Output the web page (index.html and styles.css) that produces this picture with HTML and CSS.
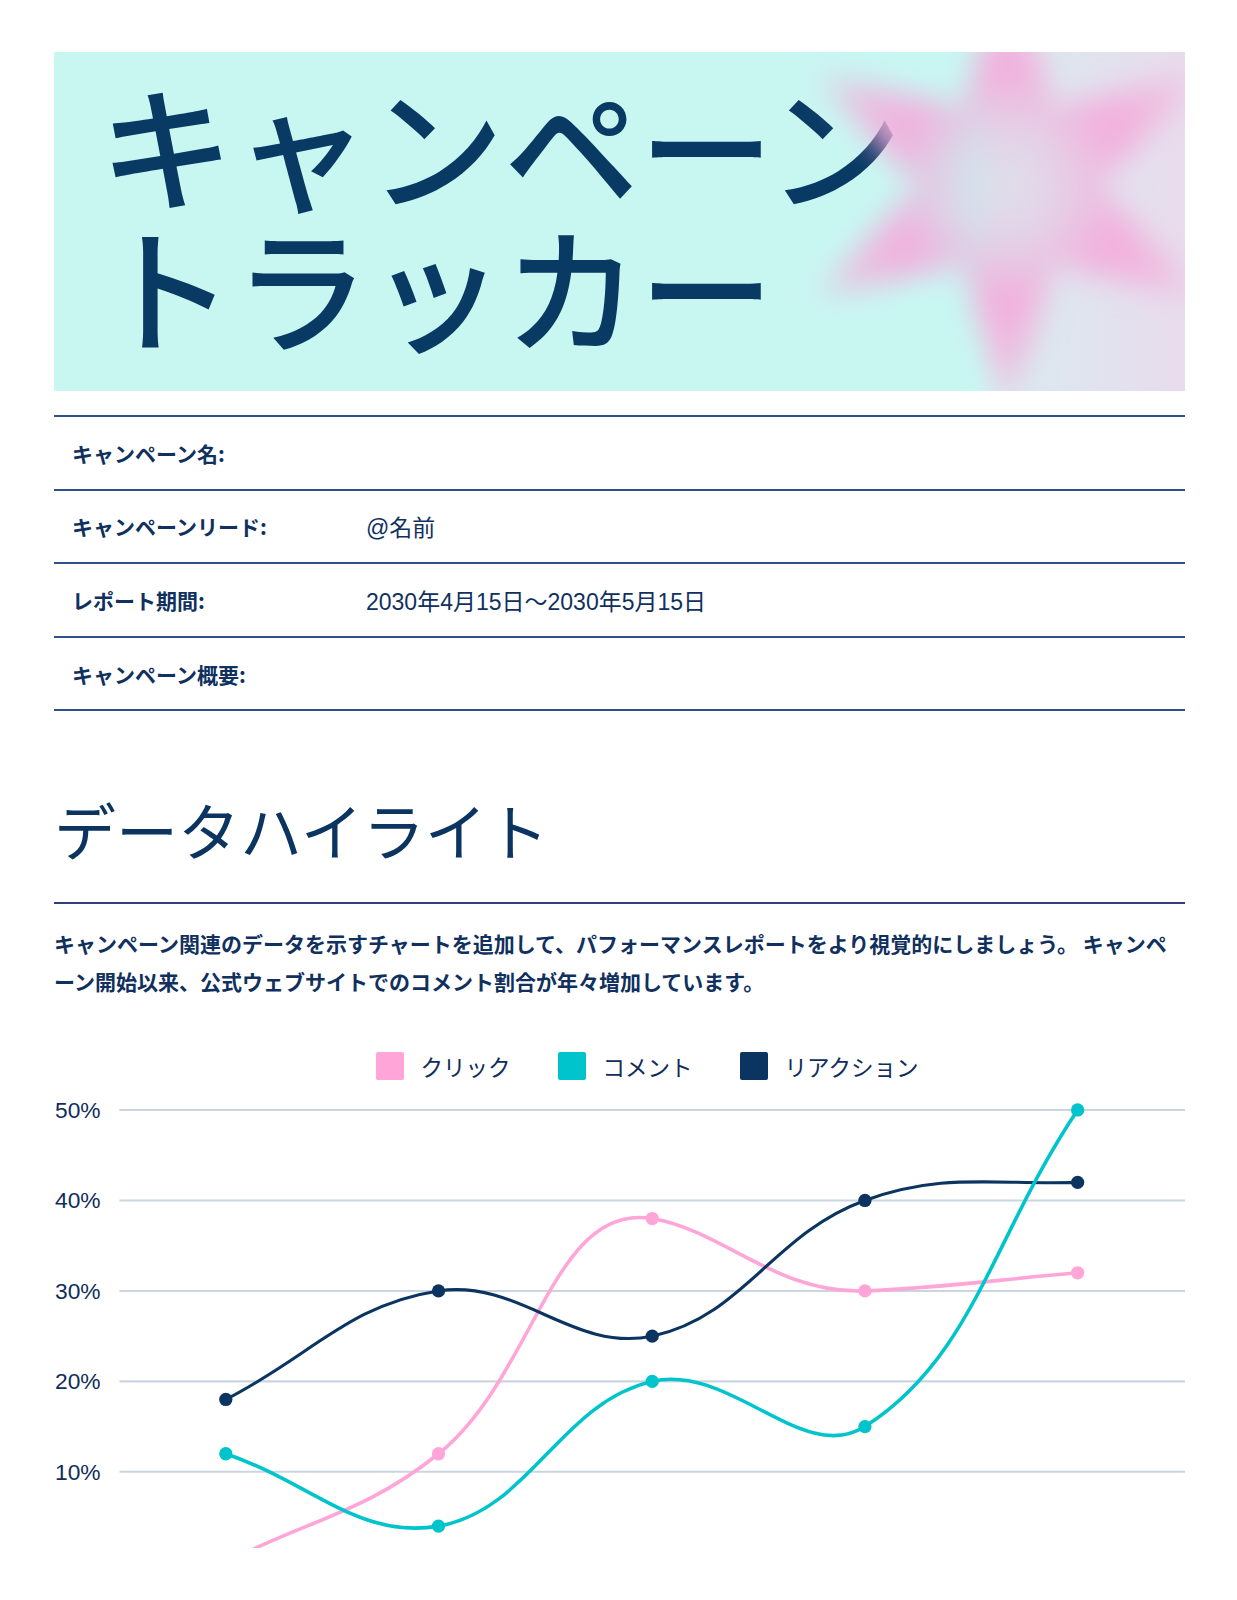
FILE: index.html
```html
<!DOCTYPE html>
<html lang="ja">
<head>
<meta charset="utf-8">
<title>キャンペーントラッカー</title>
<link rel="stylesheet" href="styles.css">
</head>
<body>
<div class="page">
  <header class="banner">
    <h1 class="title"><span class="title-line">キャンペーン</span><span class="title-line">トラッカー</span></h1>
    <svg class="star" viewBox="-250 -250 500 500" aria-hidden="true">
      <defs>
        <radialGradient id="starFill" gradientUnits="userSpaceOnUse" cx="0" cy="0" r="240">
          <stop offset="0" stop-color="#efb6dc" stop-opacity="0.2"/>
          <stop offset="0.25" stop-color="#f0b0dc" stop-opacity="0.45"/>
          <stop offset="0.48" stop-color="#f4acdb" stop-opacity="0.95"/>
          <stop offset="0.72" stop-color="#f4aedb" stop-opacity="0.75"/>
          <stop offset="1" stop-color="#f4aedb" stop-opacity="0"/>
        </radialGradient>
        <filter id="soft" x="-50%" y="-50%" width="200%" height="200%">
          <feGaussianBlur stdDeviation="15"/>
        </filter>
      </defs>
      <polygon filter="url(#soft)" fill="url(#starFill)" points="0,-235 45,-78 203,-117.5 90,0 203,117.5 45,78 0,235 -45,78 -203,117.5 -90,0 -203,-117.5 -45,-78"/>
    </svg>
  </header>

  <section class="info">
    <div class="row"><div class="label">キャンペーン名:</div><div class="value"></div></div>
    <div class="row"><div class="label">キャンペーンリード:</div><div class="value">@名前</div></div>
    <div class="row"><div class="label">レポート期間:</div><div class="value">2030年4月15日〜2030年5月15日</div></div>
    <div class="row"><div class="label">キャンペーン概要:</div><div class="value"></div></div>
  </section>

  <h2 class="section-title">データハイライト</h2>
  <p class="intro">キャンペーン関連のデータを示すチャートを追加して、パフォーマンスレポートをより視覚的にしましょう。 キャンペーン開始以来、公式ウェブサイトでのコメント割合が年々増加しています。</p>

  <div class="legend">
    <div class="legend-item"><span class="swatch swatch-click"></span><span class="legend-label">クリック</span></div>
    <div class="legend-item"><span class="swatch swatch-comment"></span><span class="legend-label">コメント</span></div>
    <div class="legend-item"><span class="swatch swatch-reaction"></span><span class="legend-label">リアクション</span></div>
  </div>

  <svg class="chart" viewBox="0 -10 1106 450" preserveAspectRatio="none">
    <g class="grid">
      <line x1="64" y1="11.5" x2="1106" y2="11.5"/>
      <line x1="64" y1="100" x2="1106" y2="100"/>
      <line x1="64" y1="188.5" x2="1106" y2="188.5"/>
      <line x1="64" y1="277" x2="1106" y2="277"/>
      <line x1="64" y1="365.5" x2="1106" y2="365.5"/>
    </g>
    <g class="ylabels">
      <text x="1" y="19">50%</text>
      <text x="1" y="107.5">40%</text>
      <text x="1" y="196">30%</text>
      <text x="1" y="284.5">20%</text>
      <text x="1" y="373">10%</text>
    </g>
    <g transform="translate(0,-1)">
      <path class="series series-click" d="M168,455 C251.2,412.5 304.4,406.5 376,348.8 C471.2,272 487.3,102.1 585,118.7 C654.1,130.4 707.7,193.1 793,189.5 C874.1,186.1 917.8,178.9 1001,171.8"/>
      <g class="dots dots-click">
        <circle cx="376" cy="348.8" r="6.5"/>
        <circle cx="585" cy="118.7" r="6.5"/>
        <circle cx="793" cy="189.5" r="6.5"/>
        <circle cx="1001" cy="171.8" r="6.5"/>
      </g>
      <path class="series series-reaction" d="M168,295.7 C251.2,253.2 288.8,202.4 376,189.5 C455.6,177.7 507.6,250.2 585,233.75 C674.4,214.8 702.9,133.6 793,101 C869.3,73.4 917.8,86 1001,83.3"/>
      <g class="dots dots-reaction">
        <circle cx="168" cy="295.7" r="6.5"/>
        <circle cx="376" cy="189.5" r="6.5"/>
        <circle cx="585" cy="233.75" r="6.5"/>
        <circle cx="793" cy="101" r="6.5"/>
        <circle cx="1001" cy="83.3" r="6.5"/>
      </g>
      <path class="series series-comment" d="M168,348.8 C251.2,377.1 298.4,432.8 376,419.6 C465.2,404.5 494.5,299.1 585,278 C661.3,260.2 732.6,360.8 793,322.25 C899,254.6 917.8,136.4 1001,12.5"/>
      <g class="dots dots-comment">
        <circle cx="168" cy="348.8" r="6.5"/>
        <circle cx="376" cy="419.6" r="6.5"/>
        <circle cx="585" cy="278" r="6.5"/>
        <circle cx="793" cy="322.25" r="6.5"/>
        <circle cx="1001" cy="12.5" r="6.5"/>
      </g>
    </g>
  </svg>
</div>
</body>
</html>
```

FILE: styles.css
```css
* { box-sizing: border-box; }

html, body {
  margin: 0;
  padding: 0;
  background: #ffffff;
}

body {
  font-family: "Noto Sans CJK JP", "Noto Sans", sans-serif;
  color: #0f2d5a;
}

.page {
  width: 1237px;
  padding: 52px 52px 0 54px;
}

/* ---------- banner ---------- */
.banner {
  position: relative;
  overflow: hidden;
  height: 339px;
  padding: 19px 0 0 45px;
  background: linear-gradient(90deg, #c8f7f2 0%, #c8f7f2 81.5%, #d8ecef 83.5%, #e1e3ee 92%, #e8dcec 100%);
}

.title {
  margin: 0;
  font-size: 135px;
  line-height: 142px;
  font-weight: 500;
  color: #083a64;
  letter-spacing: 0;
}

.title-line {
  display: block;
  white-space: nowrap;
}

.star {
  position: absolute;
  left: 704px;
  top: -116px;
  width: 500px;
  height: 500px;
  pointer-events: none;
}

/* ---------- info table ---------- */
.info {
  margin-top: 24px;
  border-bottom: 2px solid #30508a;
}

.row {
  display: grid;
  grid-template-columns: 294px 1fr;
  align-items: center;
  height: 73.6px;
  padding-left: 18px;
  border-top: 2px solid #30508a;
}

.label {
  font-size: 21px;
  font-weight: 700;
  color: #10305e;
}

.value {
  font-family: "Liberation Sans", "Noto Sans CJK JP", sans-serif;
  font-size: 23px;
  font-weight: 400;
  color: #10305e;
}

/* ---------- section ---------- */
.section-title {
  margin: 81px 0 0;
  padding-bottom: 36px;
  border-bottom: 2px solid #2f3f7a;
  font-size: 62px;
  line-height: 74px;
  font-weight: 400;
  color: #0b3560;
}

.intro {
  margin: 20px 0 0;
  font-size: 21px;
  line-height: 38px;
  font-weight: 700;
  color: #10305e;
}

/* ---------- legend ---------- */
.legend {
  display: flex;
  justify-content: center;
  align-items: center;
  gap: 47px;
  margin-top: 52px;
  padding-left: 55px;
}

.legend-item {
  display: flex;
  align-items: center;
  gap: 17px;
}

.swatch {
  display: block;
  width: 28px;
  height: 28px;
  border-radius: 2px;
}

.swatch-click { background: #ffa5d8; }
.swatch-comment { background: #00c4cc; }
.swatch-reaction { background: #0b3560; }

.legend-label {
  font-size: 22.5px;
  line-height: 28px;
  color: #0f2d5a;
}

/* ---------- chart ---------- */
.chart {
  display: block;
  margin-top: 8px;
  width: 1131px;
  height: 460px;
  overflow: hidden;
}

.grid line {
  stroke: #cad5e1;
  stroke-width: 2;
}

.ylabels text {
  font-family: "Liberation Sans", "Noto Sans", sans-serif;
  font-size: 22.3px;
  fill: #0f2d5a;
}

.series {
  fill: none;
  stroke-linecap: round;
  stroke-linejoin: round;
}

.series-click { stroke: #ffa5d8; stroke-width: 3.5; }
.series-comment { stroke: #00c4cc; stroke-width: 3.5; }
.series-reaction { stroke: #0b3560; stroke-width: 3; }

.dots-click circle { fill: #ffa5d8; }
.dots-comment circle { fill: #00c4cc; }
.dots-reaction circle { fill: #0b3560; }
```
